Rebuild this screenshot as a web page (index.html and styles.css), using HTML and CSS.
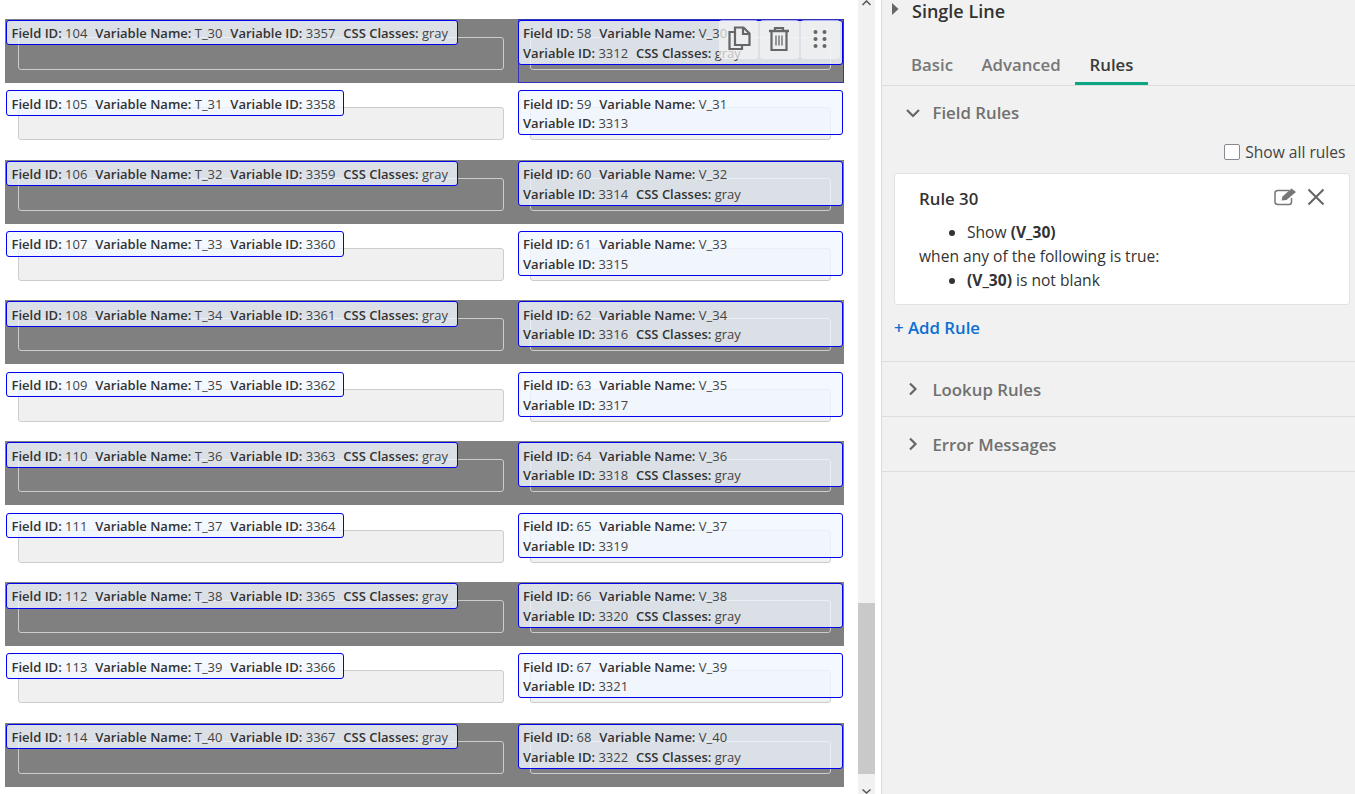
FILE: index.html
```html
<!DOCTYPE html>
<html lang="en">
<head>
<meta charset="utf-8">
<title>Form builder</title>
<link rel="stylesheet" href="styles.css">
</head>
<body>
<div class="app">
  <main class="canvas">
    <div class="row gray">
      <div class="field wide"><div class="input"></div><div class="tag"><span class="item"><b>Field ID:</b> 104</span><span class="item"><b>Variable Name:</b> T_30</span><span class="item"><b>Variable ID:</b> 3357</span><span class="item"><b>CSS Classes:</b> gray</span></div></div>
      <div class="field narrow selected"><div class="input"></div><div class="tag"><span class="item"><b>Field ID:</b> 58</span><span class="item"><b>Variable Name:</b> V_30</span><span class="item"><b>Variable ID:</b> 3312</span><span class="item"><b>CSS Classes:</b> gray</span></div>
        <div class="tools">
          <button class="tool" type="button"><svg width="26" height="26" viewBox="0 0 26 26" fill="none" stroke="#666" stroke-width="2.2"><path d="M9 6H3.500V23H16V19"/><path d="M9 1.500H17.500L23.500 7.500V19H9Z" /><path d="M17 2V8H23"/></svg></button>
          <button class="tool tool-trash" type="button"><svg width="24" height="26" viewBox="0 0 24 26" fill="none" stroke="#666" stroke-width="2.200"><path d="M2 5H22" stroke-width="2.500"/><path d="M8 4.500V2H16V4.500"/><path d="M4.500 5V24H19.500V5"/><path d="M9 9.500V19.500M12 9.500V19.500M15 9.500V19.500" stroke-width="1.300"/></svg></button>
          <button class="tool tool-drag" type="button"><svg width="14" height="20" viewBox="0 0 14 20" fill="#666"><circle cx="2.500" cy="3" r="2"/><circle cx="11.500" cy="3" r="2"/><circle cx="2.500" cy="10" r="2"/><circle cx="11.500" cy="10" r="2"/><circle cx="2.500" cy="17" r="2"/><circle cx="11.500" cy="17" r="2"/></svg></button>
        </div>
      </div>
    </div>
    <div class="row">
      <div class="field wide"><div class="input"></div><div class="tag"><span class="item"><b>Field ID:</b> 105</span><span class="item"><b>Variable Name:</b> T_31</span><span class="item"><b>Variable ID:</b> 3358</span></div></div>
      <div class="field narrow"><div class="input"></div><div class="tag"><span class="item"><b>Field ID:</b> 59</span><span class="item"><b>Variable Name:</b> V_31</span><span class="item"><b>Variable ID:</b> 3313</span></div></div>
    </div>
    <div class="row gray">
      <div class="field wide"><div class="input"></div><div class="tag"><span class="item"><b>Field ID:</b> 106</span><span class="item"><b>Variable Name:</b> T_32</span><span class="item"><b>Variable ID:</b> 3359</span><span class="item"><b>CSS Classes:</b> gray</span></div></div>
      <div class="field narrow"><div class="input"></div><div class="tag"><span class="item"><b>Field ID:</b> 60</span><span class="item"><b>Variable Name:</b> V_32</span><span class="item"><b>Variable ID:</b> 3314</span><span class="item"><b>CSS Classes:</b> gray</span></div></div>
    </div>
    <div class="row">
      <div class="field wide"><div class="input"></div><div class="tag"><span class="item"><b>Field ID:</b> 107</span><span class="item"><b>Variable Name:</b> T_33</span><span class="item"><b>Variable ID:</b> 3360</span></div></div>
      <div class="field narrow"><div class="input"></div><div class="tag"><span class="item"><b>Field ID:</b> 61</span><span class="item"><b>Variable Name:</b> V_33</span><span class="item"><b>Variable ID:</b> 3315</span></div></div>
    </div>
    <div class="row gray">
      <div class="field wide"><div class="input"></div><div class="tag"><span class="item"><b>Field ID:</b> 108</span><span class="item"><b>Variable Name:</b> T_34</span><span class="item"><b>Variable ID:</b> 3361</span><span class="item"><b>CSS Classes:</b> gray</span></div></div>
      <div class="field narrow"><div class="input"></div><div class="tag"><span class="item"><b>Field ID:</b> 62</span><span class="item"><b>Variable Name:</b> V_34</span><span class="item"><b>Variable ID:</b> 3316</span><span class="item"><b>CSS Classes:</b> gray</span></div></div>
    </div>
    <div class="row">
      <div class="field wide"><div class="input"></div><div class="tag"><span class="item"><b>Field ID:</b> 109</span><span class="item"><b>Variable Name:</b> T_35</span><span class="item"><b>Variable ID:</b> 3362</span></div></div>
      <div class="field narrow"><div class="input"></div><div class="tag"><span class="item"><b>Field ID:</b> 63</span><span class="item"><b>Variable Name:</b> V_35</span><span class="item"><b>Variable ID:</b> 3317</span></div></div>
    </div>
    <div class="row gray">
      <div class="field wide"><div class="input"></div><div class="tag"><span class="item"><b>Field ID:</b> 110</span><span class="item"><b>Variable Name:</b> T_36</span><span class="item"><b>Variable ID:</b> 3363</span><span class="item"><b>CSS Classes:</b> gray</span></div></div>
      <div class="field narrow"><div class="input"></div><div class="tag"><span class="item"><b>Field ID:</b> 64</span><span class="item"><b>Variable Name:</b> V_36</span><span class="item"><b>Variable ID:</b> 3318</span><span class="item"><b>CSS Classes:</b> gray</span></div></div>
    </div>
    <div class="row">
      <div class="field wide"><div class="input"></div><div class="tag"><span class="item"><b>Field ID:</b> 111</span><span class="item"><b>Variable Name:</b> T_37</span><span class="item"><b>Variable ID:</b> 3364</span></div></div>
      <div class="field narrow"><div class="input"></div><div class="tag"><span class="item"><b>Field ID:</b> 65</span><span class="item"><b>Variable Name:</b> V_37</span><span class="item"><b>Variable ID:</b> 3319</span></div></div>
    </div>
    <div class="row gray">
      <div class="field wide"><div class="input"></div><div class="tag"><span class="item"><b>Field ID:</b> 112</span><span class="item"><b>Variable Name:</b> T_38</span><span class="item"><b>Variable ID:</b> 3365</span><span class="item"><b>CSS Classes:</b> gray</span></div></div>
      <div class="field narrow"><div class="input"></div><div class="tag"><span class="item"><b>Field ID:</b> 66</span><span class="item"><b>Variable Name:</b> V_38</span><span class="item"><b>Variable ID:</b> 3320</span><span class="item"><b>CSS Classes:</b> gray</span></div></div>
    </div>
    <div class="row">
      <div class="field wide"><div class="input"></div><div class="tag"><span class="item"><b>Field ID:</b> 113</span><span class="item"><b>Variable Name:</b> T_39</span><span class="item"><b>Variable ID:</b> 3366</span></div></div>
      <div class="field narrow"><div class="input"></div><div class="tag"><span class="item"><b>Field ID:</b> 67</span><span class="item"><b>Variable Name:</b> V_39</span><span class="item"><b>Variable ID:</b> 3321</span></div></div>
    </div>
    <div class="row gray">
      <div class="field wide"><div class="input"></div><div class="tag"><span class="item"><b>Field ID:</b> 114</span><span class="item"><b>Variable Name:</b> T_40</span><span class="item"><b>Variable ID:</b> 3367</span><span class="item"><b>CSS Classes:</b> gray</span></div></div>
      <div class="field narrow"><div class="input"></div><div class="tag"><span class="item"><b>Field ID:</b> 68</span><span class="item"><b>Variable Name:</b> V_40</span><span class="item"><b>Variable ID:</b> 3322</span><span class="item"><b>CSS Classes:</b> gray</span></div></div>
    </div>
  </main>

  <div class="scrollbar">
    <svg class="sb-arrow" width="17" height="6" viewBox="0 0 17 6" fill="none" stroke="#555" stroke-width="1.500"><path d="M4.500 5L8.500 1L12.500 5"/></svg>
    <div class="sb-space"></div>
    <div class="sb-thumb"></div>
    <svg class="sb-arrow" width="17" height="20" viewBox="0 0 17 20" fill="none" stroke="#555" stroke-width="1.500"><path d="M4.500 15.500L8.500 19L12.500 15.500"/></svg>
  </div>

  <aside class="panel">
    <header class="panel-head">
      <svg width="7" height="12" viewBox="0 0 7 12" fill="#666"><path d="M0 0L6.500 6L0 12Z"/></svg>
      <h1 class="panel-title">Single Line</h1>
    </header>
    <nav class="tabs">
      <span class="tab">Basic</span>
      <span class="tab">Advanced</span>
      <span class="tab active">Rules</span>
    </nav>
    <section class="section open">
      <div class="section-head">
        <svg class="chev" width="16" height="16" viewBox="0 0 16 16" fill="none" stroke="#666" stroke-width="2.200"><path d="M2 5L8 11L14 5"/></svg>
        <span>Field Rules</span>
      </div>
      <label class="show-all"><span class="check"></span>Show all rules</label>
      <div class="card">
        <div class="card-head">
          <span class="card-title">Rule 30</span>
          <span class="card-icons">
            <svg width="23" height="18" viewBox="0 0 23 18" fill="none" stroke="#777" stroke-width="1.500"><path d="M15 2.500H4Q1 2.500 1 5V14Q1 16.500 4 16.500H15Q17.500 16.500 17.500 14V10"/><path d="M7.500 12.500L8.500 8.500L17.500 0.500L22 4L12.500 12Z" fill="#777" stroke="none"/></svg>
            <svg width="18" height="18" viewBox="0 0 18 18" fill="none" stroke="#666" stroke-width="2.100"><path d="M1.500 1.500L16.500 16.500M16.500 1.500L1.500 16.500"/></svg>
          </span>
        </div>
        <ul class="rule-list"><li>Show <b>(V_30)</b></li></ul>
        <div class="rule-line">when any of the following is true:</div>
        <ul class="rule-list"><li><b>(V_30)</b> is not blank</li></ul>
      </div>
      <a class="add-rule" href="#">+ Add Rule</a>
    </section>
    <section class="section">
      <div class="section-head">
        <svg class="chev" width="16" height="16" viewBox="0 0 16 16" fill="none" stroke="#666" stroke-width="2.200"><path d="M5 2.500L10.500 8L5 13.500"/></svg>
        <span>Lookup Rules</span>
      </div>
    </section>
    <section class="section">
      <div class="section-head">
        <svg class="chev" width="16" height="16" viewBox="0 0 16 16" fill="none" stroke="#666" stroke-width="2.200"><path d="M5 2.500L10.500 8L5 13.500"/></svg>
        <span>Error Messages</span>
      </div>
    </section>
  </aside>
</div>
</body>
</html>
```
FILE: styles.css
```css
* { box-sizing: border-box; }
html, body { margin: 0; height: 794px; overflow: hidden; background: #fff; }
body { font-family: "Open Sans", sans-serif; color: #333; }
.app { display: flex; height: 794px; }

.canvas { width: 858px; flex: none; padding: 18.8px 0 0 5px; overflow: hidden; }
.row { display: flex; width: 839px; height: 64px; margin-bottom: 6.4px; }
.row.gray { background: #808080; }
.field { position: relative; height: 64px; flex: none; }
.field.wide { width: 513px; padding: 18px 14px 0 13px; }
.field.narrow { width: 326px; padding: 18px 13px 0 12px; }
.input { height: 33px; background: #f0f0f0; border: 1px solid #ccc; border-radius: 3px; }
.gray .input { background: transparent; }

.tag {
  position: absolute; top: 1px; left: 1px;
  display: flex; flex-wrap: wrap; column-gap: 7.8px;
  padding: 3.4px 7.5px 0.6px 4.5px;
  font-size: 13px; line-height: 19.6px; color: #444;
  background: rgba(241, 247, 255, 0.8);
  border: 1.500px solid #0000f5; border-radius: 3px;
  white-space: nowrap;
}
.narrow .tag { left: 0; width: 325px; padding-left: 4px; }
.tag b { font-weight: 600; color: #333; }
.item { display: inline-block; }
.gray .wide .item:nth-child(4) { padding-right: 1px; }

.selected { outline: 1px solid rgba(0, 0, 220, 0.6); outline-offset: -1px; }
.tools { position: absolute; top: 1px; right: 4px; display: flex; gap: 2px; }
.tool {
  width: 39px; height: 39px; padding: 0; border: 0; border-radius: 3px;
  display: flex; align-items: center; justify-content: center;
  background: rgba(243, 243, 243, 0.7);
}
.tool-trash svg, .tool-drag svg { margin-right: 2px; }

.scrollbar { width: 17px; flex: none; height: 794px; background: #f1f1f1; display: flex; flex-direction: column; }
.sb-arrow { flex: none; display: block; }
.sb-space { height: 597px; flex: none; }
.sb-thumb { height: 171px; flex: none; background: #c9c9c9; }

.panel { margin-left: 6px; flex: 1; min-width: 0; background: #f1f1f1; border-left: 1px solid #ddd; }
.panel-head { height: 45px; display: flex; align-items: flex-start; padding: 0 0 0 10px; }
.panel-head svg { margin-top: 3px; flex: none; }
.panel-title { margin: 0 0 0 13px; font-size: 18px; font-weight: 600; line-height: 23px; color: #333; }

.tabs { height: 41px; display: flex; padding-left: 14px; border-bottom: 1px solid #ddd; }
.tab { height: 40px; padding: 6px 15px 0; font-size: 16.8px; font-weight: 600; line-height: 28px; color: #777; margin-right: -1.6px; }
.tab.active { color: #3a3a3a; border-bottom: 3px solid #0ca682; margin-left: 0.4px; }

.section { border-bottom: 1px solid #ddd; height: 55px; }
.section.open { height: 276px; }
.section-head { height: 54px; display: flex; align-items: center; padding-left: 23px; font-size: 16.8px; font-weight: 600; color: #707070; }
.section.open .section-head { height: 53px; }
.chev { flex: none; margin-right: 11.5px; }

.show-all { display: flex; align-items: center; justify-content: flex-end; height: 24px; margin: 1px 9.5px 0 0; font-size: 15.6px; color: #444; }
.check { width: 16px; height: 16px; margin-right: 5px; background: #fff; border: 1.500px solid #8a8a96; border-radius: 2px; }

.card { margin: 9px 5px 0 12px; height: 132px; padding: 13px 24px 0; background: #fff; border: 1px solid #e2e2e2; border-radius: 3px; font-size: 15.6px; line-height: 24px; color: #333; }
.card-head { display: flex; justify-content: space-between; align-items: flex-start; height: 33px; }
.card-title { font-size: 16.8px; font-weight: 600; }
.card-icons { display: flex; gap: 9.5px; margin: 1px 0.5px 0 0; }
.rule-list { margin: 0; padding-left: 48px; }
.rule-line { line-height: 24px; }
.rule-list b { font-weight: 700; }

.add-rule { display: block; margin: 11px 0 0 12px; font-size: 16.8px; font-weight: 600; line-height: 24px; color: #0b6fd3; text-decoration: none; }
```
